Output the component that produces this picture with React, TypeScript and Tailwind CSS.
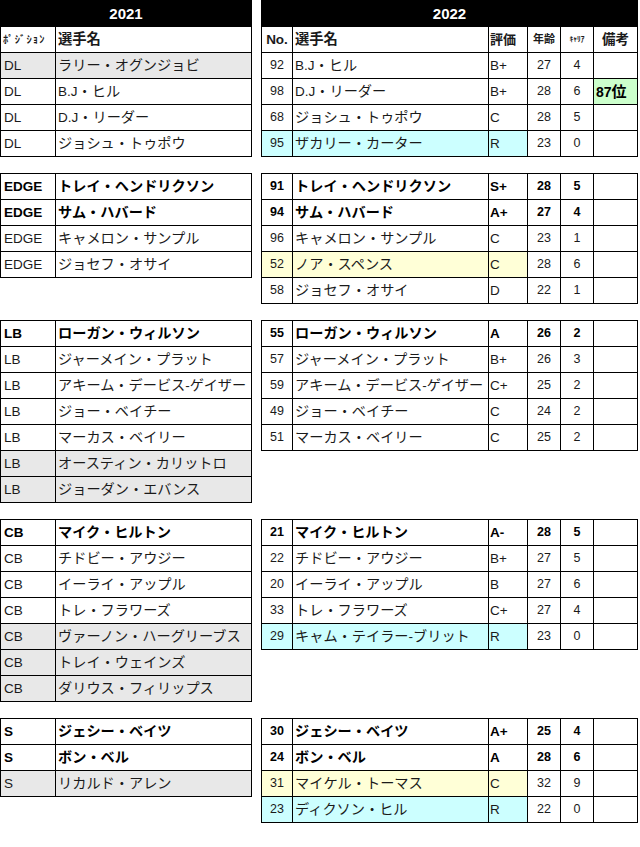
import React from 'react';
import clsx from 'clsx';

type LeftRow = [string, string, string];
type RightRow = [string, string, string, string, string, string, string?];

const blocks: { left: LeftRow[]; right: RightRow[] }[] = [
  {
    left: [
      ['DL', 'ラリー・オグンジョビ', 'g'],
      ['DL', 'B.J・ヒル', ''],
      ['DL', 'D.J・リーダー', ''],
      ['DL', 'ジョシュ・トゥポウ', ''],
    ],
    right: [
      ['92', 'B.J・ヒル', 'B+', '27', '4', ''],
      ['98', 'D.J・リーダー', 'B+', '28', '6', '', '87位'],
      ['68', 'ジョシュ・トゥポウ', 'C', '28', '5', ''],
      ['95', 'ザカリー・カーター', 'R', '23', '0', 'c'],
    ],
  },
  {
    left: [
      ['EDGE', 'トレイ・ヘンドリクソン', 'b'],
      ['EDGE', 'サム・ハバード', 'b'],
      ['EDGE', 'キャメロン・サンプル', ''],
      ['EDGE', 'ジョセフ・オサイ', ''],
    ],
    right: [
      ['91', 'トレイ・ヘンドリクソン', 'S+', '28', '5', 'b'],
      ['94', 'サム・ハバード', 'A+', '27', '4', 'b'],
      ['96', 'キャメロン・サンプル', 'C', '23', '1', ''],
      ['52', 'ノア・スペンス', 'C', '28', '6', 'y'],
      ['58', 'ジョセフ・オサイ', 'D', '22', '1', ''],
    ],
  },
  {
    left: [
      ['LB', 'ローガン・ウィルソン', 'b'],
      ['LB', 'ジャーメイン・プラット', ''],
      ['LB', 'アキーム・デービス-ゲイザー', ''],
      ['LB', 'ジョー・ベイチー', ''],
      ['LB', 'マーカス・ベイリー', ''],
      ['LB', 'オースティン・カリットロ', 'g'],
      ['LB', 'ジョーダン・エバンス', 'g'],
    ],
    right: [
      ['55', 'ローガン・ウィルソン', 'A', '26', '2', 'b'],
      ['57', 'ジャーメイン・プラット', 'B+', '26', '3', ''],
      ['59', 'アキーム・デービス-ゲイザー', 'C+', '25', '2', ''],
      ['49', 'ジョー・ベイチー', 'C', '24', '2', ''],
      ['51', 'マーカス・ベイリー', 'C', '25', '2', ''],
    ],
  },
  {
    left: [
      ['CB', 'マイク・ヒルトン', 'b'],
      ['CB', 'チドビー・アウジー', ''],
      ['CB', 'イーライ・アップル', ''],
      ['CB', 'トレ・フラワーズ', ''],
      ['CB', 'ヴァーノン・ハーグリーブス', 'g'],
      ['CB', 'トレイ・ウェインズ', 'g'],
      ['CB', 'ダリウス・フィリップス', 'g'],
    ],
    right: [
      ['21', 'マイク・ヒルトン', 'A-', '28', '5', 'b'],
      ['22', 'チドビー・アウジー', 'B+', '27', '5', ''],
      ['20', 'イーライ・アップル', 'B', '27', '6', ''],
      ['33', 'トレ・フラワーズ', 'C+', '27', '4', ''],
      ['29', 'キャム・テイラー-ブリット', 'R', '23', '0', 'c'],
    ],
  },
  {
    left: [
      ['S', 'ジェシー・ベイツ', 'b'],
      ['S', 'ボン・ベル', 'b'],
      ['S', 'リカルド・アレン', 'g'],
    ],
    right: [
      ['30', 'ジェシー・ベイツ', 'A+', '25', '4', 'b'],
      ['24', 'ボン・ベル', 'A', '28', '6', 'b'],
      ['31', 'マイケル・トーマス', 'C', '32', '9', 'y'],
      ['23', 'ディクソン・ヒル', 'R', '22', '0', 'c'],
    ],
  },
];

// latin runs get their own size, like the sheet's font
const Mixed = ({ s, lat = 'text-[13.5px]' }: { s: string; lat?: string }) => (
  <>
    {s.split(/([ -~]+)/).map((p, i) =>
      /[ -~]/.test(p) ? (
        <span key={i} className={lat}>{p}</span>
      ) : (
        <span key={i}>{p}</span>
      )
    )}
  </>
);

const cell = 'h-full border-r border-black flex items-center';
const num = 'text-[12.5px]';

const LeftTable = ({ rows, head }: { rows: LeftRow[]; head: boolean }) => (
  <div className="w-[252px]">
    {head && (
      <div className="h-[26px] bg-black text-white font-bold text-[15px] flex items-center justify-center">2021</div>
    )}
    <div className="border-l border-t border-black">
      {head && (
        <div className="flex h-[26px] border-b border-black font-bold">
          <div className={clsx(cell, 'w-[55px] pl-[2px] text-[10.5px] tracking-[1.2px]')}>ﾎﾟｼﾞｼｮﾝ</div>
          <div className={clsx(cell, 'w-[196px] pl-[2px] text-[14.3px]')}>選手名</div>
        </div>
      )}
      {rows.map(([pos, name, f], i) => (
        <div
          key={i}
          className={clsx('flex h-[26px] border-b border-black', f === 'g' && 'bg-[#e8e8e8]', f === 'b' && 'font-bold text-black')}
        >
          <div className={clsx(cell, 'w-[55px] pl-[3px]')}><Mixed s={pos} /></div>
          <div className={clsx(cell, 'w-[196px] pl-[2px] text-[14.2px]')}><Mixed s={name} /></div>
        </div>
      ))}
    </div>
  </div>
);

const RightTable = ({ rows, head }: { rows: RightRow[]; head: boolean }) => (
  <div className="w-[377px]">
    {head && (
      <div className="h-[26px] bg-black text-white font-bold text-[15px] flex items-center justify-center">2022</div>
    )}
    <div className="border-l border-t border-black">
      {head && (
        <div className="flex h-[26px] border-b border-black font-bold">
          <div className={clsx(cell, 'w-[31px] justify-center text-[13.5px]')}>No.</div>
          <div className={clsx(cell, 'w-[196px] pl-[2px] text-[14.3px]')}>選手名</div>
          <div className={clsx(cell, 'w-[39px] pl-[1px] text-[13px]')}>評価</div>
          <div className={clsx(cell, 'w-[33px] justify-center text-[11px]')}>年齢</div>
          <div className={clsx(cell, 'w-[33px] justify-center text-[7.5px]')}>ｷｬﾘｱ</div>
          <div className={clsx(cell, 'w-[44px] justify-center text-[13.5px]')}>備考</div>
        </div>
      )}
      {rows.map(([no, name, grade, age, career, f, note], i) => {
        const fill = f === 'c' ? 'bg-[#ccffff]' : f === 'y' ? 'bg-[#ffffd7]' : '';
        return (
          <div key={i} className={clsx('flex h-[26px] border-b border-black', f === 'b' && 'font-bold text-black')}>
            <div className={clsx(cell, fill, 'w-[31px] justify-center')}><Mixed s={no} lat={num} /></div>
            <div className={clsx(cell, fill, 'w-[196px] pl-[2px] text-[14.2px]')}><Mixed s={name} /></div>
            <div className={clsx(cell, fill, 'w-[39px] pl-[1px]')}><Mixed s={grade} /></div>
            <div className={clsx(cell, 'w-[33px] justify-center')}><Mixed s={age} lat={num} /></div>
            <div className={clsx(cell, 'w-[33px] justify-center')}><Mixed s={career} lat={num} /></div>
            <div className={clsx(cell, 'w-[44px] pl-[2px] text-[15px]', note && 'bg-[#ccffcc] font-bold text-black')}>
              {note && <Mixed s={note} lat="text-[14px]" />}
            </div>
          </div>
        );
      })}
    </div>
  </div>
);

const App = () => {
  return (
    <div className="w-[640px] min-h-[847px] bg-white text-[#1a1a1a] font-['Liberation_Sans','Noto_Sans_CJK_JP',sans-serif] leading-none flex flex-col gap-4">
      {blocks.map((b, i) => (
        <div key={i} className="flex items-start gap-[9px]">
          <LeftTable rows={b.left} head={i === 0} />
          <RightTable rows={b.right} head={i === 0} />
        </div>
      ))}
    </div>
  );
};

export default App;
